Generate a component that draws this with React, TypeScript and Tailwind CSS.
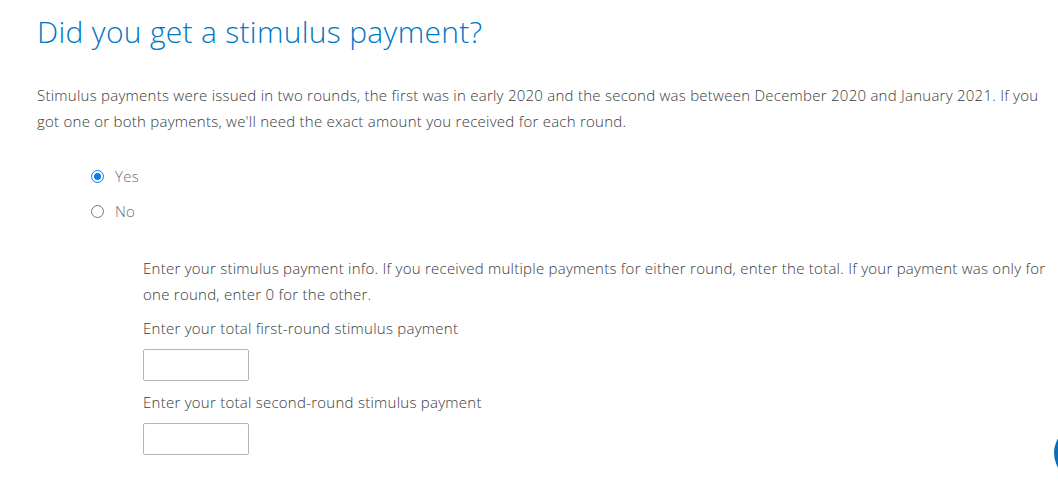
import React, { useState } from 'react';

const font = { fontFamily: '"Open Sans", Lato, sans-serif' };

const RadioOption: React.FC<{ label: string; checked: boolean; onSelect: () => void }> = ({ label, checked, onSelect }) => (
  <label className="flex h-[35px] cursor-pointer items-center gap-[11px]" onClick={onSelect}>
    <span
      className={
        checked
          ? 'flex h-[13px] w-[13px] items-center justify-center rounded-full border-[1.5px] border-[#0a7cf0]'
          : 'flex h-[13px] w-[13px] items-center justify-center rounded-full border border-[#767676]'
      }
    >
      {checked && <span className="h-[7px] w-[7px] rounded-full bg-[#0a7cf0]" />}
    </span>
    <span className="text-[15px] font-light tracking-[0.25px] text-[#6b6c72]">{label}</span>
  </label>
);

export default function App() {
  const [answer, setAnswer] = useState<'yes' | 'no'>('yes');

  return (
    <div className="relative h-[483px] w-full overflow-hidden bg-white" style={font}>
      <div className="pl-[37px] pt-[12px]">
        <h1 className="text-[30px] font-light leading-[40px] tracking-[0.3px] text-[#0077c5]">Did you get a stimulus payment?</h1>

        <p className="mt-[30px] text-[15px] font-light leading-[26px] tracking-[0.25px] text-[#393a3d]">
          Stimulus payments were issued in two rounds, the first was in early 2020 and the second was between December 2020 and January 2021. If you got one or both payments, we'll need the exact amount you received for each round.
        </p>

        <div className="mt-[25px] pl-[54px]">
          <RadioOption label="Yes" checked={answer === 'yes'} onSelect={() => setAnswer('yes')} />
          <RadioOption label="No" checked={answer === 'no'} onSelect={() => setAnswer('no')} />
        </div>

        <div className="mt-[26px] pl-[106px] text-[15px] font-light tracking-[0.25px] text-[#393a3d]">
          <p className="leading-[26px]">
            Enter your stimulus payment info. If you received multiple payments for either round, enter the total. If your payment was only for one round, enter 0 for the other.
          </p>
          <p className="mt-[11px] leading-[20px]">Enter your total first-round stimulus payment</p>
          <input className="mt-[11px] block h-[32px] w-[106px] rounded-[2px] border border-[#b5b5b5] bg-white px-2" />
          <p className="mt-[11px] leading-[20px]">Enter your total second-round stimulus payment</p>
          <input className="mt-[11px] block h-[32px] w-[106px] rounded-[2px] border border-[#b5b5b5] bg-white px-2" />
        </div>
      </div>

      {/* chat launcher peeking in from the right edge */}
      <div className="absolute left-[1054px] top-[425px] h-[56px] w-[56px] rounded-full bg-[#0a6fb8]" />
    </div>
  );
}
